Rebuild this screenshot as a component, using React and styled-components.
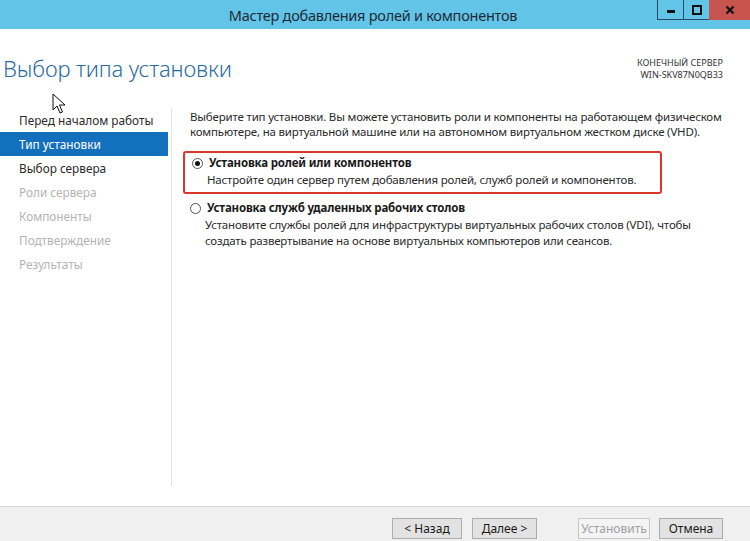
import React from "react";
import styled, { createGlobalStyle } from "styled-components";

const GlobalStyle = createGlobalStyle`
  html, body {
    margin: 0;
    padding: 0;
    background: #ffffff;
  }
  body {
    font-family: "Noto Sans", "Open Sans", sans-serif;
  }
`;

const Window = styled.div`
  width: 750px;
  height: 541px;
  display: flex;
  flex-direction: column;
  position: relative;
  overflow: hidden;
  background: #ffffff;
`;

const TitleBar = styled.div`
  height: 29px;
  flex-shrink: 0;
  background: #62c5e8;
  display: flex;
  align-items: flex-start;
  position: relative;
`;

const TitleText = styled.div`
  flex: 1;
  text-align: center;
  font-size: 14.5px;
  line-height: 31px;
  color: #1e2a36;
  letter-spacing: -0.25px;
  padding-right: 4px;
`;

const Controls = styled.div`
  position: absolute;
  top: 0;
  right: 0;
  display: flex;
`;

const CtrlButton = styled.div`
  width: ${({ $wide }) => ($wide ? "41px" : "26px")};
  height: 20px;
  box-sizing: border-box;
  display: flex;
  align-items: center;
  justify-content: center;
  background: ${({ $close }) => ($close ? "#c85450" : "transparent")};
  border-left: ${({ $close }) => ($close ? "none" : "1px solid #2a4a63")};
  border-bottom: ${({ $close }) => ($close ? "none" : "1px solid #2a4a63")};
`;

const Header = styled.div`
  display: flex;
  justify-content: space-between;
  align-items: flex-start;
  padding: 24px 27px 0 3px;
  height: 55px;
  flex-shrink: 0;
`;

const Heading = styled.h1`
  margin: 0;
  font-weight: 300;
  font-size: 22px;
  line-height: 30px;
  color: #2a6b9f;
  letter-spacing: -0.1px;
`;

const ServerInfo = styled.div`
  text-align: right;
  font-size: 9px;
  line-height: 12px;
  color: #333;
  padding-top: 4px;
`;

const Body = styled.div`
  flex: 1;
  display: flex;
  padding-bottom: 20px;
`;

const Nav = styled.div`
  width: 171px;
  flex-shrink: 0;
  border-right: 1px solid #dce5ee;
`;

const NavItem = styled.div`
  height: 24px;
  width: 168px;
  box-sizing: border-box;
  padding-left: 19px;
  font-size: 11.8px;
  line-height: 24px;
  white-space: nowrap;
  background: ${({ $active }) => ($active ? "#1370bd" : "transparent")};
  color: ${({ $active, $disabled }) =>
    $active ? "#ffffff" : $disabled ? "#b4b4b4" : "#2a2a2a"};
`;

const Content = styled.div`
  flex: 1;
  padding: 0 10px 0 18px;
  font-size: 11.5px;
  letter-spacing: -0.18px;
  color: #2a2a2a;
  white-space: nowrap;
`;

const Intro = styled.p`
  margin: 0;
  line-height: 15px;
  padding-top: 1px;
`;

const Option = styled.div`
  margin: ${({ $boxed }) => ($boxed ? "12px 0 0 -7px" : "5px 0 0 0")};
  width: ${({ $boxed }) => ($boxed ? "479px" : "auto")};
  box-sizing: border-box;
  padding: ${({ $boxed }) => ($boxed ? "1px 0 4px 7px" : "0")};
  border: ${({ $boxed }) => ($boxed ? "2px solid #d9362c" : "none")};
  border-radius: 3px;
`;

const OptionLabel = styled.div`
  display: flex;
  align-items: center;
  gap: 6px;
  font-weight: 700;
  line-height: 18px;
  color: #1a1a1a;
`;

const Radio = styled.span`
  width: 11px;
  height: 11px;
  box-sizing: border-box;
  border-radius: 50%;
  border: 1px solid #555;
  background: #fff;
  display: inline-flex;
  align-items: center;
  justify-content: center;
  flex-shrink: 0;
  &::after {
    content: "";
    width: 5px;
    height: 5px;
    border-radius: 50%;
    background: ${({ $checked }) => ($checked ? "#111" : "transparent")};
  }
`;

const OptionText = styled.div`
  padding-left: 15px;
  line-height: 16px;
`;

const Footer = styled.div`
  height: 35px;
  flex-shrink: 0;
  box-sizing: border-box;
  background: #f0f0f0;
  border-top: 1px solid #cfd6dc;
  display: flex;
  align-items: flex-start;
  justify-content: flex-end;
  padding: 11px 27px 0 0;
`;

const Button = styled.div`
  width: ${({ $w }) => $w}px;
  height: 21px;
  box-sizing: border-box;
  border: 1px solid ${({ $disabled }) => ($disabled ? "#c8c8c8" : "#acacac")};
  background: ${({ $disabled }) => ($disabled ? "#f4f4f4" : "#e2e2e2")};
  color: ${({ $disabled }) => ($disabled ? "#a0a0a0" : "#1a1a1a")};
  font-size: 12px;
  line-height: 19px;
  text-align: center;
  margin-left: ${({ $gap }) => $gap}px;
`;

const Cursor = styled.svg`
  position: absolute;
  left: 52px;
  top: 93px;
`;

const navItems = [
  { label: "Перед началом работы" },
  { label: "Тип установки", active: true },
  { label: "Выбор сервера" },
  { label: "Роли сервера", disabled: true },
  { label: "Компоненты", disabled: true },
  { label: "Подтверждение", disabled: true },
  { label: "Результаты", disabled: true },
];

const buttons = [
  { label: "< Назад", w: 70, gap: 0 },
  { label: "Далее >", w: 65, gap: 10 },
  { label: "Установить", w: 72, gap: 41, disabled: true },
  { label: "Отмена", w: 64, gap: 9 },
];

export default function App() {
  return (
    <>
      <GlobalStyle />
      <Window>
        <TitleBar>
          <TitleText>Мастер добавления ролей и компонентов</TitleText>
          <Controls>
            <CtrlButton>
              <svg width="10" height="10" viewBox="0 0 10 10">
                <rect x="1" y="5" width="8" height="3" fill="#111" />
              </svg>
            </CtrlButton>
            <CtrlButton>
              <svg width="10" height="10" viewBox="0 0 10 10">
                <rect x="1" y="1" width="8" height="8" fill="none" stroke="#111" strokeWidth="2" />
              </svg>
            </CtrlButton>
            <CtrlButton $close $wide>
              <svg width="10" height="10" viewBox="0 0 10 10">
                <path d="M1.5 1.5 L8.5 8.5 M8.5 1.5 L1.5 8.5" stroke="#111" strokeWidth="2.2" />
              </svg>
            </CtrlButton>
          </Controls>
        </TitleBar>

        <Header>
          <Heading>Выбор типа установки</Heading>
          <ServerInfo>
            КОНЕЧНЫЙ СЕРВЕР
            <br />
            WIN-SKV87N0QB33
          </ServerInfo>
        </Header>

        <Body>
          <Nav>
            {navItems.map((item) => (
              <NavItem key={item.label} $active={item.active} $disabled={item.disabled}>
                {item.label}
              </NavItem>
            ))}
          </Nav>
          <Content>
            <Intro>
              Выберите тип установки. Вы можете установить роли и компоненты на работающем физическом
              <br />
              компьютере, на виртуальной машине или на автономном виртуальном жестком диске (VHD).
            </Intro>
            <Option $boxed>
              <OptionLabel>
                <Radio $checked />
                Установка ролей или компонентов
              </OptionLabel>
              <OptionText>
                Настройте один сервер путем добавления ролей, служб ролей и компонентов.
              </OptionText>
            </Option>
            <Option>
              <OptionLabel>
                <Radio />
                Установка служб удаленных рабочих столов
              </OptionLabel>
              <OptionText>
                Установите службы ролей для инфраструктуры виртуальных рабочих столов (VDI), чтобы
                <br />
                создать развертывание на основе виртуальных компьютеров или сеансов.
              </OptionText>
            </Option>
          </Content>
        </Body>

        <Footer>
          {buttons.map((b) => (
            <Button key={b.label} $w={b.w} $gap={b.gap} $disabled={b.disabled}>
              {b.label}
            </Button>
          ))}
        </Footer>

        <Cursor width="14" height="22" viewBox="0 0 14 22">
          <path
            d="M1 1 L1 17 L5 13 L8 20 L10.5 19 L7.5 12 L13 12 Z"
            fill="#fff"
            stroke="#111"
            strokeWidth="1"
            strokeLinejoin="round"
          />
        </Cursor>
      </Window>
    </>
  );
}
